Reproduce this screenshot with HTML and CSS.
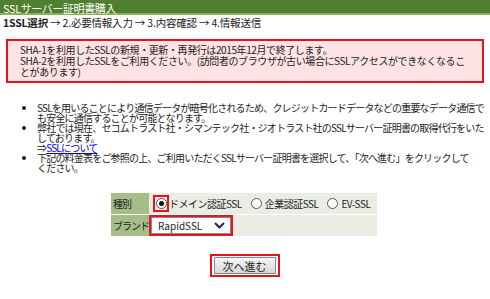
FILE: index.html
```html
<!DOCTYPE html>
<html lang="ja">
<head>
  <meta charset="UTF-8">
  <title>SSLサーバー証明書購入</title>
  <link rel="stylesheet" href="styles.css">
</head>
<body>
  <div class="titulo">SSLサーバー証明書購入</div>
  <div class="passos"><b>1SSL選択</b> → 2.必要情報入力 → 3.内容確認 → 4.情報送信</div>

  <div class="aviso">
    SHA-1を利用したSSLの新規・更新・再発行は2015年12月で終了します。<br>
    SHA-2を利用したSSLをご利用ください。(訪問者のブラウザが古い場合にSSLアクセスができなくなることがあります)
  </div>

  <ul class="lista">
    <li>SSLを用いることにより通信データが暗号化されるため、クレジットカードデータなどの重要なデータ通信でも安全に通信することが可能となります。</li>
    <li>弊社では現在、セコムトラスト社・シマンテック社・ジオトラスト社のSSLサーバー証明書の取得代行をいたしております。<br>⇒<a href="#">SSLについて</a></li>
    <li>下記の料金表をご参照の上、ご利用いただくSSLサーバー証明書を選択して、「次へ進む」をクリックして<br>ください。</li>
  </ul>

  <table class="form">
    <tr>
      <th>種別</th>
      <td>
        <div class="opcoes">
          <label class="opcao"><span class="marca"><span class="radio on"></span></span>ドメイン認証SSL</label>
          <label class="opcao"><span class="radio"></span>企業認証SSL</label>
          <label class="opcao"><span class="radio"></span>EV-SSL</label>
        </div>
      </td>
    </tr>
    <tr>
      <th>ブランド</th>
      <td>
        <div class="select">RapidSSL
          <svg width="11" height="7" viewBox="0 0 11 7"><path d="M1 1 L5.5 5.5 L10 1" fill="none" stroke="#1a2a5a" stroke-width="2"/></svg>
        </div>
      </td>
    </tr>
  </table>

  <div class="acoes">
    <div class="botao-borda"><button class="botao">次へ進む</button></div>
  </div>
</body>
</html>
```

FILE: styles.css
```css
body {
  margin: 0;
  background: #fff;
  font-family: "Noto Sans CJK JP", "DejaVu Sans", sans-serif;
  font-size: 10px;
  letter-spacing: -0.2px;
  color: #222;
  width: 490px;
}

.titulo {
  background: #4f802d;
  border-bottom: 2px solid #8db060;
  color: #fff;
  font-size: 11px;
  letter-spacing: -0.4px;
  line-height: 10px;
  padding: 3px 3px 0;
}

.passos {
  font-size: 10.5px;
  padding: 2px 3px 0;
  line-height: 12px;
}

.passos b {
  font-weight: bold;
}

.aviso {
  margin: 10px 6px 0 6px;
  border: 2px solid #e8141b;
  background: #fde3e4;
  padding: 3px 8px 4px 12px;
  line-height: 11px;
  letter-spacing: -0.4px;
}

.lista {
  margin: 20px 0 0 0;
  padding: 0 3px 0 37px;
  line-height: 10px;
  letter-spacing: -0.8px;
}

.lista li {
  margin: 0;
}

.lista a {
  color: #0000ee;
}

.form {
  margin: 19px 0 0 111px;
  border-collapse: separate;
  border-spacing: 0 1px;
  letter-spacing: -0.5px;
}

.form th {
  background: #a5bd89;
  font-weight: normal;
  text-align: left;
  padding: 0 0 0 2px;
  width: 36px;
  height: 21px;
  white-space: nowrap;
  letter-spacing: -1px;
}

.form td {
  background: #e9ede4;
  padding: 0 3px 0 0;
  width: 225px;
  height: 21px;
  white-space: nowrap;
}

.opcoes {
  display: flex;
  align-items: center;
  gap: 9px;
  padding-left: 4px;
}

.opcao {
  display: inline-flex;
  align-items: center;
}

.marca {
  display: inline-flex;
  align-items: center;
  justify-content: center;
  border: 2px solid #e8141b;
  width: 12px;
  height: 13px;
}

.radio {
  display: inline-block;
  width: 11px;
  height: 11px;
  border: 1px solid #555;
  border-radius: 50%;
  background: #fff;
  box-sizing: border-box;
  margin-right: 3px;
  position: relative;
}

.marca .radio {
  margin-right: 0;
}

.radio.on::after {
  content: "";
  position: absolute;
  left: 2px;
  top: 2px;
  width: 5px;
  height: 5px;
  border-radius: 50%;
  background: #111;
}

.select {
  display: flex;
  align-items: center;
  justify-content: space-between;
  box-sizing: border-box;
  width: 84px;
  height: 21px;
  padding: 0 6px 0 7px;
  border: 2px solid #e8141b;
  box-shadow: inset 0 0 0 1px #8a8a8a;
  background: #fff;
  letter-spacing: 0;
}

.acoes {
  display: flex;
  justify-content: center;
  margin-top: 17px;
  padding-right: 1px;
}

.botao-borda {
  border: 2px solid #e8141b;
  padding: 1px 2px;
  display: flex;
}

.botao {
  font-family: inherit;
  font-size: 11px;
  width: 62px;
  height: 17px;
  padding: 0;
  line-height: 14px;
  border: 1px solid #8a8a8a;
  background: linear-gradient(#f6f6f6, #d6d6d6);
  color: #222;
}
```
